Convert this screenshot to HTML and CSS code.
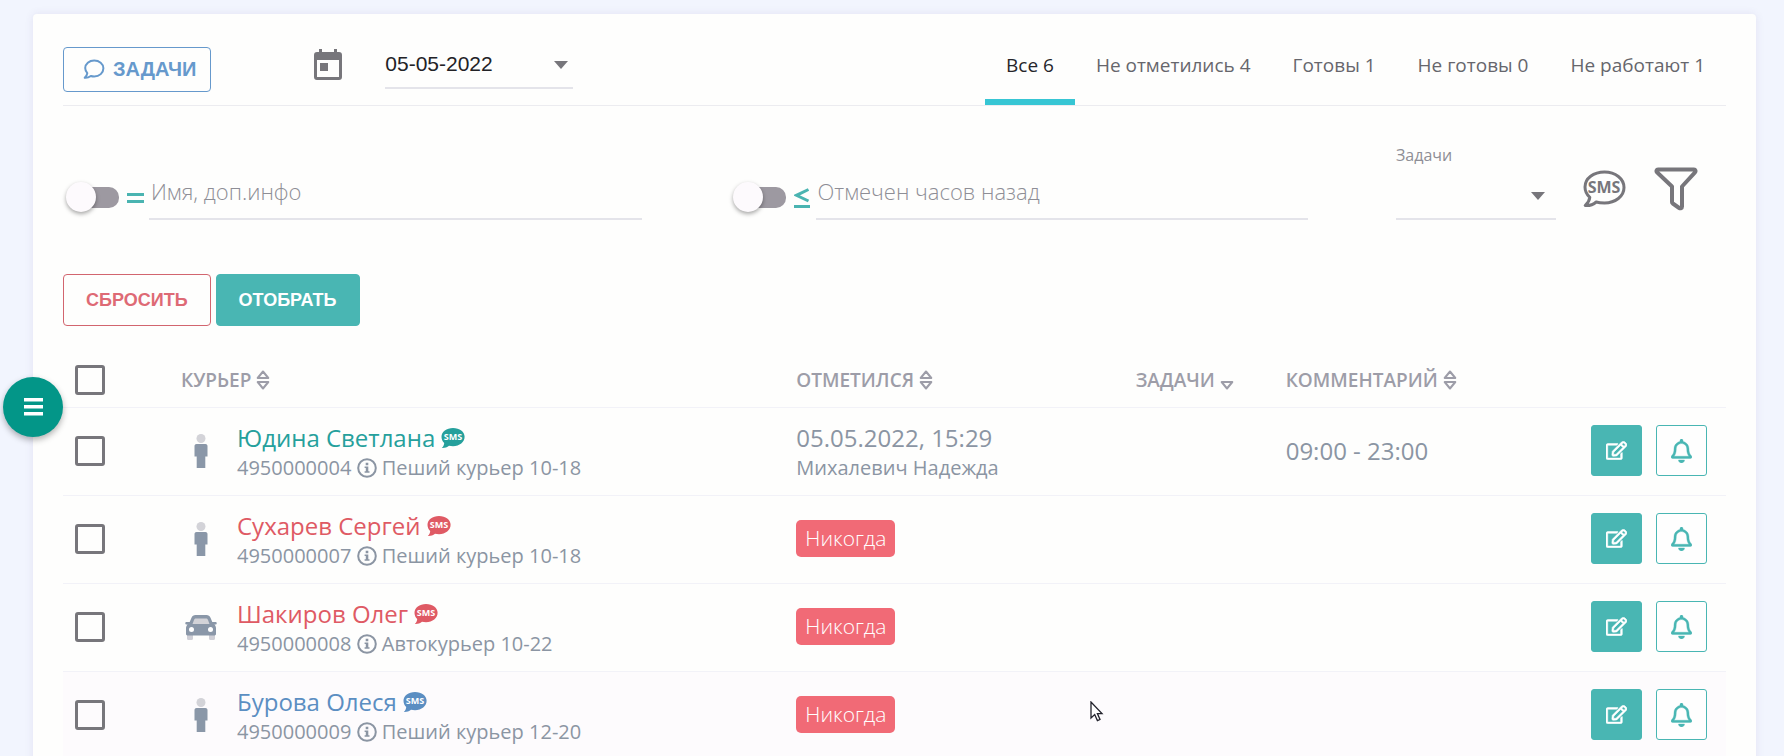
FILE: index.html
```html
<!DOCTYPE html>
<html lang="ru">
<head>
  <meta charset="UTF-8">
  <meta name="viewport" content="width=device-width, initial-scale=1">
  <title>Курьеры</title>
  <link rel="stylesheet" href="styles.css">
</head>
<body>
  <!-- Иконки -->
  <svg class="sprite" aria-hidden="true">
    <symbol id="i-sms" viewBox="0 0 24 22">
      <path d="M12 1C5.600 1 .5 4.700 .5 9.800c0 2.500 1 4.600 2.700 6.200C3.200 17.800 2.200 19.600.8 21c2.700.2 5.200-.6 7.200-2.200 1.200.3 2.600.4 4 .4 6.600 0 11.600-4.200 11.600-9.400S18.600 1 12 1z" fill="currentColor"/>
      <text x="12" y="13" text-anchor="middle" class="sms-mini">SMS</text>
    </symbol>
    <symbol id="i-info" viewBox="0 0 20 20">
      <circle cx="10" cy="10" r="8.800" fill="none" stroke="currentColor" stroke-width="2"/>
      <path d="M8.700 4.800h2.600v2.400H8.700zM7.600 8.400h3.700v4.900h1.200v1.500H7.600v-1.500h1.200V9.900H7.600z" fill="currentColor"/>
    </symbol>
    <symbol id="i-man" viewBox="0 0 14 34">
      <circle cx="7" cy="4.500" r="4.500" fill="#d3d3d8"/>
      <path d="M2.500 10h9c1 0 2 .9 2 2v10.500h-2.200V34H2.700V22.500H.5V12c0-1.100.9-2 2-2z" fill="#8a97a8"/>
    </symbol>
    <symbol id="i-car" viewBox="0 0 32 26">
      <path d="M2 20h6v4.500a1.500 1.500 0 0 1-1.500 1.500h-3A1.500 1.500 0 0 1 2 24.500zM24 20h6v4.500a1.500 1.500 0 0 1-1.500 1.500h-3a1.500 1.500 0 0 1-1.500-1.500z" fill="#cfcfd6"/>
      <path d="M10.500 1h11c2 0 3.200 1 4 2.800L27.300 8H31c1 0 1 2.500 0 2.500h-1.600c1 1 1.600 2.300 1.600 3.800V20c0 .8-.6 1.400-1.400 1.400H2.400C1.600 21.400 1 20.800 1 20v-5.700c0-1.500.6-2.800 1.600-3.800H1C0 10.500 0 8 1 8h3.700l1.800-4.200C7.300 2 8.500 1 10.500 1z" fill="#8a97a8"/>
      <path d="M11 4.500h10c1 0 1.500.4 1.900 1.300l1.600 4.200h-17l1.600-4.200c.4-.9.900-1.300 1.900-1.300z" fill="#d3d3d8"/>
      <circle cx="6.500" cy="15.500" r="2.500" fill="#fff"/>
      <circle cx="25.500" cy="15.500" r="2.500" fill="#fff"/>
    </symbol>
    <symbol id="i-sort" viewBox="0 0 14 20">
      <path d="M7 1.500 12.300 8H1.700zM7 18.500 1.700 12h10.600z" fill="none" stroke="currentColor" stroke-width="2" stroke-linejoin="round"/>
    </symbol>
    <symbol id="i-sort-down" viewBox="0 0 14 20">
      <path d="M7 18.500 1.700 12h10.600z" fill="none" stroke="currentColor" stroke-width="2" stroke-linejoin="round"/>
    </symbol>
    <symbol id="i-edit" viewBox="0 0 576 512">
      <path d="M402.300 344.900l32-32c5-5 13.700-1.500 13.700 5.700V464c0 26.500-21.500 48-48 48H48c-26.500 0-48-21.500-48-48V112c0-26.500 21.500-48 48-48h273.500c7.100 0 10.700 8.600 5.700 13.700l-32 32c-1.500 1.500-3.500 2.300-5.700 2.300H48v352h352V350.500c0-2.100.8-4.100 2.300-5.600zm156.600-201.800L296.300 405.700l-90.400 10c-26.200 2.900-48.500-19.200-45.600-45.600l10-90.400L432.900 17.100c22.900-22.900 59.900-22.900 82.700 0l43.200 43.200c22.900 22.900 22.900 60 .1 82.800zM460.100 174L402 115.900 216.200 301.800l-7.300 65.300 65.300-7.300L460.100 174zm64.800-79.700l-43.200-43.200c-4.100-4.100-10.800-4.100-14.800 0L436 82l58.100 58.100 30.900-30.900c4-4.200 4-10.800-.1-14.900z" fill="currentColor" stroke="currentColor" stroke-width="14"/>
    </symbol>
    <symbol id="i-bell" viewBox="0 0 448 512">
      <path d="M439.400 362.300c-19.300-20.800-55.500-52-55.500-154.300 0-77.700-54.500-139.900-127.900-155.200V32c0-17.700-14.300-32-32-32s-32 14.300-32 32v20.800C118.600 68.100 64.100 130.300 64.100 208c0 102.300-36.200 133.500-55.500 154.300-6 6.400-8.600 14.100-8.600 21.700.1 16.400 13 32 32.100 32h383.800c19.100 0 32-15.600 32.100-32 0-7.600-2.600-15.300-8.600-21.700zM67.500 368c21.200-28 44.400-74.300 44.500-159.400 0-.2-.1-.4-.1-.6 0-61.900 50.100-112 112-112s112 50.100 112 112c0 .2-.1.400-.1.600.1 85.100 23.300 131.500 44.500 159.400zM224 512c35.300 0 64-28.700 64-64H160c0 35.300 28.700 64 64 64z" fill="currentColor" stroke="currentColor" stroke-width="8"/>
    </symbol>
    <symbol id="i-caret" viewBox="0 0 14 8">
      <path d="M0 0h14L7 8z" fill="currentColor"/>
    </symbol>
  </svg>

  <button class="menu-btn" aria-label="Меню">
    <svg width="20" height="18" viewBox="0 0 20 18"><path d="M1 0h19v3.400H1zM1 7h19v3.400H1zM1 14h19v3.400H1z" fill="#fff"/></svg>
  </button>

  <main class="card">
    <header class="top">
      <button class="btn-tasks">
        <svg width="22" height="21" viewBox="0 0 22 21"><path d="M11.200 1.500c-5 0-9 3.300-9 7.600 0 2 .8 3.700 2.100 5-.2 1.800-1.200 3.400-2.600 4.700 2.300.2 4.400-.5 6.100-1.800 1.100.3 2.200.5 3.400.5 5.200 0 9.200-3.600 9.200-8.200s-4.200-7.800-9.200-7.800z" fill="none" stroke="currentColor" stroke-width="2" stroke-linejoin="round"/></svg>
        ЗАДАЧИ
      </button>
      <svg class="calendar" width="28" height="32" viewBox="0 0 28 32"><path d="M5 0h3v3h12V0h3v3h2a3 3 0 0 1 3 3v22a3 3 0 0 1-3 3H3a3 3 0 0 1-3-3V6a3 3 0 0 1 3-3h2zM3 11v17h22V11zm3 3h8v8H6z" fill="#77767b" fill-rule="evenodd"/></svg>
      <div class="select date">
        <select aria-label="Дата">
          <option>05-05-2022</option>
        </select>
        <svg class="caret"><use href="#i-caret"/></svg>
      </div>
      <nav class="tabs">
        <a href="#all" class="active">Все 6</a>
        <a href="#unmarked">Не отметились 4</a>
        <a href="#ready">Готовы 1</a>
        <a href="#not-ready">Не готовы 0</a>
        <a href="#off">Не работают 1</a>
      </nav>
    </header>

    <section class="filters">
      <div class="filter">
        <input type="checkbox" class="switch" aria-label="Точное совпадение">
        <span class="sign"><svg width="18" height="24" viewBox="0 0 18 24"><path d="M0 6h17v3H0zM0 13h17v3H0z" fill="currentColor"/></svg></span>
        <input type="text" class="field" placeholder="Имя, доп.инфо" aria-label="Имя, доп.инфо">
      </div>
      <div class="filter">
        <input type="checkbox" class="switch" aria-label="Больше или меньше">
        <span class="sign"><svg width="18" height="24" viewBox="0 0 18 24"><path d="M14.500 2.500 2.500 8.300l12 5.700" fill="none" stroke="currentColor" stroke-width="3"/><path d="M0 18h16v3H0z" fill="currentColor"/></svg></span>
        <input type="text" class="field" placeholder="Отмечен часов назад" aria-label="Отмечен часов назад">
      </div>
      <div class="filter-tools">
        <div class="task-filter">
          <label for="tasks">Задачи</label>
          <div class="select">
            <select id="tasks"><option></option></select>
            <svg class="caret"><use href="#i-caret"/></svg>
          </div>
        </div>
        <button class="icon-btn" aria-label="SMS">
          <svg width="44" height="44" viewBox="0 0 44 44"><path d="M22.500 5C11.500 5 3 11.400 3 20c0 4.300 1.900 7.700 4.800 10.300-.3 3.200-2 5.600-4.600 8.200 4.400.3 7.900-.8 11-3.500 2.600.8 5.300 1 8.300 1C33.500 36 42 29.200 42 20.500S33.500 5 22.500 5z" fill="none" stroke="currentColor" stroke-width="3" stroke-linejoin="round"/><text x="22" y="26" text-anchor="middle" class="sms-big">SMS</text></svg>
        </button>
        <button class="icon-btn" aria-label="Фильтр">
          <svg width="44" height="44" viewBox="0 0 44 44"><path d="M4 2.500h36c1.400 0 2 1.800 1 2.800L28 19.500v20c0 1.600-1.600 2.300-2.800 1.500l-6.400-4.500c-.5-.4-.8-.9-.8-1.500V19.500L3 5.300c-1-1-.4-2.800 1-2.800z" fill="none" stroke="currentColor" stroke-width="4" stroke-linejoin="round"/></svg>
        </button>
      </div>
    </section>

    <div class="actions">
      <button class="btn-reset">СБРОСИТЬ</button>
      <button class="btn-apply">ОТОБРАТЬ</button>
    </div>

    <table>
      <colgroup>
        <col class="c-check"><col class="c-name"><col><col class="c-tasks"><col class="c-note"><col class="c-act">
      </colgroup>
      <thead>
        <tr>
          <th><input type="checkbox" class="check" aria-label="Выбрать всех"></th>
          <th>КУРЬЕР <svg class="sort"><use href="#i-sort"/></svg></th>
          <th>ОТМЕТИЛСЯ <svg class="sort"><use href="#i-sort"/></svg></th>
          <th>ЗАДАЧИ <svg class="sort"><use href="#i-sort-down"/></svg></th>
          <th>КОММЕНТАРИЙ <svg class="sort"><use href="#i-sort"/></svg></th>
          <th></th>
        </tr>
      </thead>
      <tbody>
        <tr>
          <td><input type="checkbox" class="check" aria-label="Юдина Светлана"></td>
          <td>
            <div class="courier">
              <svg class="type"><use href="#i-man"/></svg>
              <div>
                <a href="#4950000004" class="name green">Юдина Светлана <svg class="sms"><use href="#i-sms"/></svg></a>
                <div class="sub">4950000004 <svg class="info"><use href="#i-info"/></svg> Пеший курьер 10-18</div>
              </div>
            </div>
          </td>
          <td><div class="big">05.05.2022, 15:29</div><div class="sub">Михалевич Надежда</div></td>
          <td></td>
          <td><div class="big">09:00 - 23:00</div></td>
          <td>
            <div class="row-btns">
              <button class="edit" aria-label="Изменить"><svg width="21" height="19"><use href="#i-edit"/></svg></button>
              <button class="bell" aria-label="Напомнить"><svg width="21" height="24"><use href="#i-bell"/></svg></button>
            </div>
          </td>
        </tr>
        <tr>
          <td><input type="checkbox" class="check" aria-label="Сухарев Сергей"></td>
          <td>
            <div class="courier">
              <svg class="type"><use href="#i-man"/></svg>
              <div>
                <a href="#4950000007" class="name red">Сухарев Сергей <svg class="sms"><use href="#i-sms"/></svg></a>
                <div class="sub">4950000007 <svg class="info"><use href="#i-info"/></svg> Пеший курьер 10-18</div>
              </div>
            </div>
          </td>
          <td><span class="never">Никогда</span></td>
          <td></td>
          <td></td>
          <td>
            <div class="row-btns">
              <button class="edit" aria-label="Изменить"><svg width="21" height="19"><use href="#i-edit"/></svg></button>
              <button class="bell" aria-label="Напомнить"><svg width="21" height="24"><use href="#i-bell"/></svg></button>
            </div>
          </td>
        </tr>
        <tr>
          <td><input type="checkbox" class="check" aria-label="Шакиров Олег"></td>
          <td>
            <div class="courier">
              <svg class="type"><use href="#i-car"/></svg>
              <div>
                <a href="#4950000008" class="name red">Шакиров Олег <svg class="sms"><use href="#i-sms"/></svg></a>
                <div class="sub">4950000008 <svg class="info"><use href="#i-info"/></svg> Автокурьер 10-22</div>
              </div>
            </div>
          </td>
          <td><span class="never">Никогда</span></td>
          <td></td>
          <td></td>
          <td>
            <div class="row-btns">
              <button class="edit" aria-label="Изменить"><svg width="21" height="19"><use href="#i-edit"/></svg></button>
              <button class="bell" aria-label="Напомнить"><svg width="21" height="24"><use href="#i-bell"/></svg></button>
            </div>
          </td>
        </tr>
        <tr class="hovered">
          <td><input type="checkbox" class="check" aria-label="Бурова Олеся"></td>
          <td>
            <div class="courier">
              <svg class="type"><use href="#i-man"/></svg>
              <div>
                <a href="#4950000009" class="name blue">Бурова Олеся <svg class="sms"><use href="#i-sms"/></svg></a>
                <div class="sub">4950000009 <svg class="info"><use href="#i-info"/></svg> Пеший курьер 12-20</div>
              </div>
            </div>
          </td>
          <td><span class="never">Никогда</span></td>
          <td></td>
          <td></td>
          <td>
            <div class="row-btns">
              <button class="edit" aria-label="Изменить"><svg width="21" height="19"><use href="#i-edit"/></svg></button>
              <button class="bell" aria-label="Напомнить"><svg width="21" height="24"><use href="#i-bell"/></svg></button>
            </div>
          </td>
        </tr>
      </tbody>
    </table>
  </main>

  <svg class="pointer" width="16" height="22" viewBox="0 0 16 22" aria-hidden="true"><path d="M1 1v16l3.700-3.400 2.700 6 2.600-1.100-2.600-5.900H12z" fill="#fff" stroke="#22222c" stroke-width="1.300"/></svg>
</body>
</html>
```

FILE: styles.css
```css
* {
  box-sizing: border-box;
}
body {
  margin: 0;
  height: 100vh;
  overflow: hidden;
  background-color: #f2f5fe;
  font-family: "Open Sans", "Noto Sans", sans-serif;
  color: #8b95a3;
}
button {
  cursor: pointer;
  font-family: "Liberation Sans", Arial, sans-serif;
  font-weight: bold;
}
.sprite {
  display: none;
}
.card {
  margin: 14px 28px 0 33px;
  padding: 0 30px;
  min-height: 100vh;
  background-color: #fefefd;
  border-radius: 4px;
  box-shadow: 0 0 8px rgba(90, 60, 140, 0.1);
}

/* Верхняя панель */
.top {
  display: flex;
  align-items: center;
  height: 92px;
  border-bottom: 1px solid #ececf0;
}
.btn-tasks {
  display: flex;
  align-items: center;
  gap: 8px;
  height: 45px;
  margin-top: 33px;
  padding: 0 14px 0 19px;
  align-self: flex-start;
  background: none;
  border: 1px solid #6699cc;
  border-radius: 4px;
  color: #6699cc;
  font-size: 20px;
}
.calendar {
  margin: 10px 43px 0 103px;
}
.select {
  position: relative;
  border-bottom: 2px solid #e4e4ea;
}
.select select {
  display: block;
  width: 100%;
  height: 46px;
  padding: 0;
  appearance: none;
  background: none;
  border: none;
  color: #222226;
  font-family: "Liberation Sans", Arial, sans-serif;
  font-size: 21px;
}
.caret {
  position: absolute;
  right: 11px;
  top: 20px;
  width: 14px;
  height: 8px;
  color: #77767b;
  pointer-events: none;
}
.date {
  width: 188px;
  margin-top: 10px;
}
.date .caret {
  right: 5px;
}
.tabs {
  display: flex;
  align-self: stretch;
  margin-left: auto;
}
.tabs a {
  padding: 33px 21px 0;
  border-bottom: 6px solid transparent;
  color: #66666c;
  font-size: 19px;
  line-height: 36px;
  text-decoration: none;
}
.tabs .active {
  border-color: #37c6d4;
  color: #25252a;
}

/* Фильтры */
.filters {
  display: grid;
  grid-template-columns: 1fr 1fr 330px;
  align-items: end;
  gap: 88px;
  height: 114px;
}
.filter {
  display: flex;
  align-items: flex-end;
}
.switch {
  position: relative;
  flex: none;
  width: 41px;
  height: 21px;
  margin: 0 8px 12px 15px;
  appearance: none;
  border-radius: 10px;
  background-color: #9d99a1;
}
.switch::before {
  content: "";
  position: absolute;
  left: -12px;
  top: -5px;
  width: 30px;
  height: 30px;
  border-radius: 50%;
  background-color: #fdfafd;
  box-shadow: 0 2px 4px rgba(0, 0, 0, 0.35);
}
.sign {
  width: 22px;
  height: 24px;
  margin-bottom: 9px;
  color: #4ab4b1;
}
.sign svg {
  display: block;
}
.field {
  flex: 1;
  min-width: 0;
  height: 54px;
  padding: 0 2px 2px;
  background: none;
  border: none;
  border-bottom: 2px solid #e4e4ea;
  font-family: inherit;
  font-size: 22px;
  font-weight: 300;
}
.field::placeholder {
  color: #8e8e96;
}
.filter-tools {
  display: flex;
  align-items: flex-end;
}
.task-filter {
  width: 161px;
  margin-right: 26px;
}
.task-filter label {
  display: block;
  margin-bottom: 6px;
  color: #8e8e96;
  font-size: 16px;
}
.icon-btn {
  height: 44px;
  margin: 0 28px 9px 0;
  padding: 0;
  background: none;
  border: none;
  color: #77767b;
}
.icon-btn svg {
  display: block;
}
.sms-big {
  fill: #77767b;
  font: bold 16px "Liberation Sans Narrow", "Open Sans", sans-serif;
}

/* Кнопки фильтра */
.actions {
  display: flex;
  gap: 5px;
  padding: 54px 0 27px;
}
.actions button {
  height: 52px;
  padding: 0 22px;
  border-radius: 4px;
  font-size: 18px;
}
.btn-reset {
  background: none;
  border: 1px solid #d2656f;
  color: #de6a75;
}
.btn-apply {
  background-color: #49b6b3;
  border: 1px solid #49b6b3;
  color: white;
}

/* Таблица курьеров */
table {
  width: 100%;
  table-layout: fixed;
  border-collapse: collapse;
}
.c-check {
  width: 106px;
}
.c-name {
  width: 37%;
}
.c-tasks {
  width: 150px;
}
.c-note {
  width: 18%;
}
.c-act {
  width: 153px;
}
th, td {
  padding: 0 12px;
  border-bottom: 1px solid #f2f2f8;
  text-align: left;
}
th {
  height: 54px;
  color: #9d9da8;
  font-size: 19px;
  font-weight: 600;
  white-space: nowrap;
}
td {
  height: 88px;
  padding-bottom: 1px;
}
.hovered {
  background-color: #fdfbfd;
}
.sort {
  width: 14px;
  height: 20px;
  vertical-align: -3px;
}
.check {
  display: block;
  width: 30px;
  height: 30px;
  margin: 0;
  appearance: none;
  border: 3px solid #77767b;
  border-radius: 3px;
}
.courier {
  display: flex;
  align-items: center;
}
.type {
  width: 32px;
  height: 34px;
  margin: 0 20px 0 4px;
}
.name {
  display: block;
  text-decoration: none;
}
.name, .big {
  font-size: 24px;
  line-height: 34px;
}
.sub {
  font-size: 20px;
  line-height: 26px;
}
.green {
  color: #25a09c;
}
.red {
  color: #df5a64;
}
.blue {
  color: #5b8ec2;
}
.sms {
  width: 24px;
  height: 22px;
  vertical-align: -2px;
}
.sms-mini {
  fill: #fff;
  font: bold 9px "Liberation Sans Narrow", "Open Sans", sans-serif;
}
.info {
  width: 20px;
  height: 20px;
  vertical-align: -3px;
}
.never {
  display: inline-block;
  padding: 0 9px;
  border-radius: 5px;
  background-color: #f16a76;
  color: white;
  font-size: 21px;
  font-weight: 300;
  line-height: 37px;
}
.row-btns {
  display: flex;
  gap: 14px;
  justify-content: flex-end;
  padding-right: 7px;
}
.row-btns button {
  display: flex;
  align-items: center;
  justify-content: center;
  flex: none;
  width: 51px;
  height: 51px;
  padding: 0;
  border: 1px solid #49b6b3;
  border-radius: 3px;
}
.row-btns .edit {
  background-color: #49b6b3;
  color: white;
}
.row-btns .bell {
  background-color: #fefefe;
  color: #49b6b3;
}

/* Поверх страницы */
.menu-btn {
  position: fixed;
  left: 3px;
  top: 377px;
  display: flex;
  align-items: center;
  justify-content: center;
  width: 60px;
  height: 60px;
  padding: 0;
  border: none;
  border-radius: 50%;
  background-color: #039688;
  box-shadow: 0 3px 6px rgba(0, 0, 0, 0.3);
}
.pointer {
  position: fixed;
  left: 1090px;
  top: 701px;
}
```
